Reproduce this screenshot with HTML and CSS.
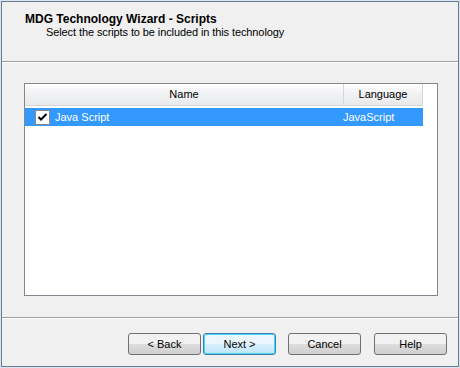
FILE: index.html
```html
<html lang="en">
<head>
    <meta charset="UTF-8">
    <title>MDG Technology Wizard - Scripts</title>
    <link rel="stylesheet" href="styles.css">
</head>
<body>
    <div class="window">
        <div class="frame">
            <header class="wizard-header">
                <h1 class="wizard-title">MDG Technology Wizard - Scripts</h1>
                <p class="wizard-subtitle">Select the scripts to be included in this technology</p>
            </header>
            <section class="wizard-body">
                <div class="list-view">
                    <div class="list-head">
                        <div class="col col-name">Name</div>
                        <div class="col col-lang">Language</div>
                        <div class="col col-rest"></div>
                    </div>
                    <div class="list-row selected">
                        <div class="cell cell-name">
                            <span class="checkbox">
                                <svg width="11" height="11" viewBox="0 0 11 11"><path d="M1.5 5 L4 7.5 L9.5 2" fill="none" stroke="#000" stroke-width="2"/></svg>
                            </span>
                            Java Script
                        </div>
                        <div class="cell cell-lang">JavaScript</div>
                    </div>
                </div>
            </section>
            <footer class="wizard-footer">
                <button class="btn btn-back">&lt; Back</button>
                <button class="btn btn-default">Next &gt;</button>
                <button class="btn btn-cancel">Cancel</button>
                <button class="btn btn-help">Help</button>
            </footer>
        </div>
    </div>
</body>
</html>
```

FILE: styles.css
```css
* {
    margin: 0;
    padding: 0;
    box-sizing: border-box;
}

body {
    font-family: "Liberation Sans", Arial, sans-serif;
    font-size: 11px;
    color: #000;
    background: #d9e4f1;
}

.window {
    width: 460px;
    height: 368px;
    border: 1px solid #d9e4f1;
}

.frame {
    height: 100%;
    border: 1px solid #6b7b93;
    background: #f0f0f0;
    display: flex;
    flex-direction: column;
}

.wizard-header {
    height: 60px;
    padding: 10px 0 0 23px;
    border-bottom: 1px solid #a0a0a0;
    box-shadow: 0 1px 0 #fff;
}

.wizard-title {
    font-size: 12px;
    font-weight: bold;
}

.wizard-subtitle {
    margin: 0 0 0 21px;
    letter-spacing: -0.1px;
}

.wizard-body {
    height: 256px;
    padding: 21px 20px 0 22px;
    border-bottom: 1px solid #a0a0a0;
}

.list-view {
    height: 213px;
    border: 1px solid #828790;
    background: #fff;
}

.list-head {
    display: flex;
    height: 22px;
}

.col {
    line-height: 21px;
    text-align: center;
    background: linear-gradient(#fff, #f1f2f4 45%, #e8e9eb);
    border-bottom: 1px solid #d5d5d5;
    border-right: 1px solid #d5d5d5;
}

.col-name {
    width: 319px;
}

.col-lang {
    width: 79px;
}

.col-rest {
    flex: 1;
    background: #fff;
    border: none;
}

.list-row {
    display: flex;
    height: 18px;
    margin-top: 2px;
    width: 398px;
    line-height: 18px;
}

.selected {
    background: #3399ff;
    color: #fff;
}

.cell-name {
    width: 318px;
    display: flex;
    align-items: center;
    padding-left: 10px;
    gap: 5px;
}

.cell-lang {
    flex: 1;
}

.checkbox {
    width: 15px;
    height: 15px;
    background: #fff;
    border: 1px solid #8a8a8a;
    display: flex;
    align-items: center;
    justify-content: center;
}

.wizard-footer {
    flex: 1;
    display: flex;
    align-items: flex-start;
    padding: 14px 0 0 126px;
    border-top: 1px solid #fff;
}

.btn {
    width: 73px;
    height: 22px;
    font-family: inherit;
    font-size: 11px;
    border: 1px solid #707070;
    border-radius: 3px;
    background: linear-gradient(#f2f2f2 50%, #dddddd 50%, #cfcfcf);
}

.btn-back {
    margin-right: 2px;
}

.btn-default {
    border-color: #3c7fb1;
    box-shadow: inset 0 0 0 1px #48d4fc;
    background: linear-gradient(#eaf6fd 50%, #d9f0fc 50%, #bee6fd);
}

.btn-cancel {
    margin-left: 12px;
}

.btn-help {
    margin-left: 13px;
}
```
